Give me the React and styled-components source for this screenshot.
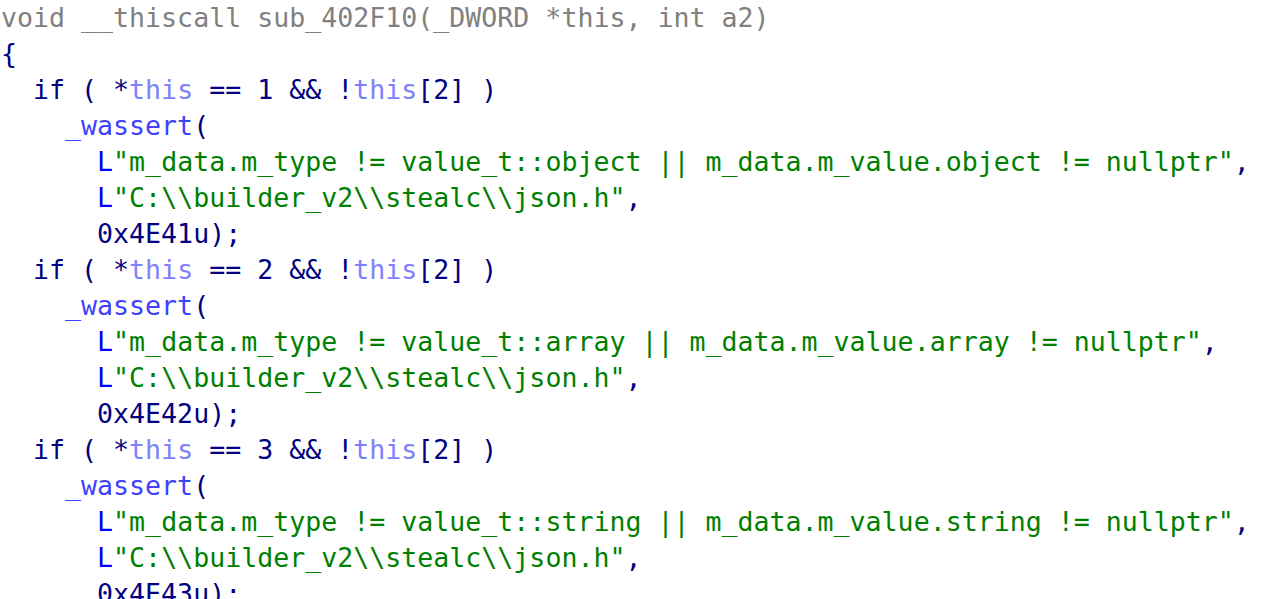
import React from 'react';
import styled, { createGlobalStyle } from 'styled-components';

const GlobalStyle = createGlobalStyle`
  html, body {
    margin: 0;
    padding: 0;
    background: #ffffff;
  }
`;

const colors = {
  plain: '#000080',
  gray: '#808080',
  self: '#8080ff',
  func: '#4040ff',
  prefix: '#0000ff',
  str: '#008000',
};

const Listing = styled.pre`
  margin: 0;
  padding: 0 0 0 1px;
  font-family: 'DejaVu Sans Mono', 'Liberation Mono', monospace;
  font-size: 26.6px;
  line-height: 36px;
  color: ${colors.plain};
  background: #ffffff;
  height: 599px;
  overflow: hidden;
`;

const Line = styled.div`
  height: 36px;
  white-space: pre;
  color: ${(p) => (p.$dim ? colors.gray : colors.plain)};
`;

const Tok = styled.span`
  color: ${(p) => colors[p.$kind] || 'inherit'};
`;

// one block per assert
const blocks = [
  { n: 1, kind: 'object', code: '0x4E41u' },
  { n: 2, kind: 'array', code: '0x4E42u' },
  { n: 3, kind: 'string', code: '0x4E43u' },
];

function IfLine({ n }) {
  return (
    <Line>
      {'  if ( *'}
      <Tok $kind="self">this</Tok>
      {` == ${n} && !`}
      <Tok $kind="self">this</Tok>
      {'[2] )'}
    </Line>
  );
}

function Str({ text }) {
  return (
    <>
      <Tok $kind="prefix">L</Tok>
      <Tok $kind="str">{`"${text}"`}</Tok>
      {','}
    </>
  );
}

export default function App() {
  return (
    <>
      <GlobalStyle />
      <Listing>
        <Line $dim>void __thiscall sub_402F10(_DWORD *this, int a2)</Line>
        <Line>{'{'}</Line>
        {blocks.map((b) => (
          <React.Fragment key={b.n}>
            <IfLine n={b.n} />
            <Line>
              {'    '}
              <Tok $kind="func">_wassert</Tok>
              {'('}
            </Line>
            <Line>
              {'      '}
              <Str text={`m_data.m_type != value_t::${b.kind} || m_data.m_value.${b.kind} != nullptr`} />
            </Line>
            <Line>
              {'      '}
              <Str text={'C:\\\\builder_v2\\\\stealc\\\\json.h'} />
            </Line>
            <Line>{`      ${b.code});`}</Line>
          </React.Fragment>
        ))}
      </Listing>
    </>
  );
}
